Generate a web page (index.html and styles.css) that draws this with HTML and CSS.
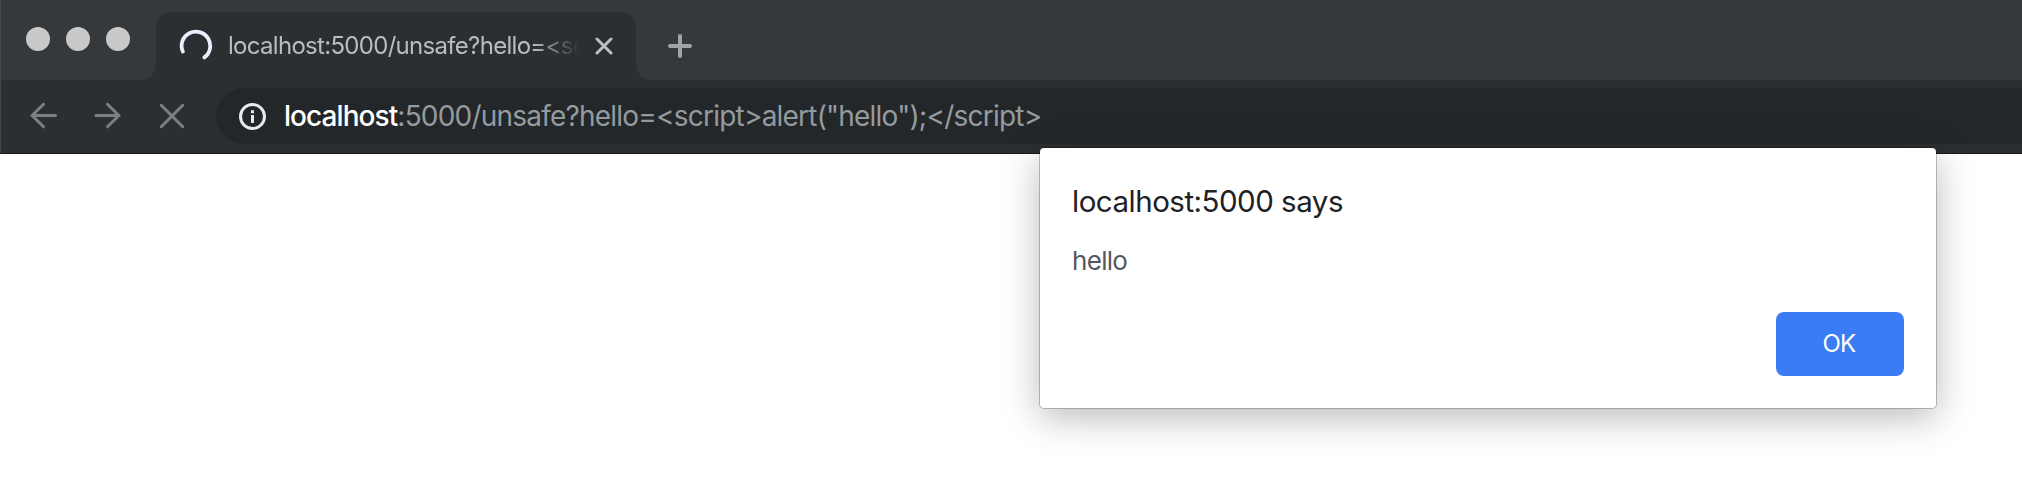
FILE: index.html
```html
<!DOCTYPE html>
<html lang="en">
<head>
<meta charset="utf-8">
<title>localhost:5000</title>
<link rel="stylesheet" href="styles.css">
</head>
<body>
<header class="browser">
  <div class="tabstrip">
    <div class="lights"><i class="light"></i><i class="light"></i><i class="light"></i></div>
    <div class="tab">
      <svg class="spinner" width="34" height="34" viewBox="0 0 34 34"><path d="M3.8 22.6A14.3 14.3 0 1 1 25.4 28.4" /></svg>
      <span class="tab-title">localhost:5000/unsafe?hello=&lt;sc</span>
      <svg class="tab-close" width="18" height="18" viewBox="0 0 18 18"><path d="M2 2L16 16M16 2L2 16"/></svg>
    </div>
    <svg class="new-tab" width="24" height="24" viewBox="0 0 24 24"><path d="M12 2V22M2 12H22"/></svg>
  </div>
  <div class="toolbar">
    <nav class="nav">
      <svg width="28" height="28" viewBox="0 0 28 28"><path d="M25.5 13.5H2.5M13.5 2.2L2.2 13.5L13.5 24.8"/></svg>
      <svg width="28" height="28" viewBox="0 0 28 28"><path d="M2 13.5H25M13.5 2.2L24.8 13.5L13.5 24.8"/></svg>
      <svg width="28" height="28" viewBox="0 0 28 28"><path d="M3.3 3.3L24.7 24.7M24.7 3.3L3.3 24.7"/></svg>
    </nav>
    <div class="omnibox">
      <svg class="info" width="28" height="28" viewBox="0 0 28 28"><circle cx="14.5" cy="14.5" r="12"/><path d="M14.5 13V21M14.5 8.2V11.2"/></svg>
      <span class="url"><b>localhost</b>:5000/unsafe?hello=&lt;script&gt;alert("hello");&lt;/script&gt;</span>
    </div>
  </div>
</header>
<section class="dialog">
  <h1 class="dialog-title">localhost:5000 says</h1>
  <p class="dialog-text">hello</p>
  <button class="ok">OK</button>
</section>
</body>
</html>
```
FILE: styles.css
```css
* { box-sizing: border-box; }
body {
  margin: 0;
  height: 494px;
  overflow: hidden;
  background: #fff;
  font-family: Inter, "Liberation Sans", sans-serif;
}
svg { display: block; flex: none; fill: none; stroke-linecap: round; }
.browser {
  height: 154px;
  background: #2b2f32;
  border-bottom: 1px solid #17191b;
  box-shadow: inset 1px 0 #45494b;
}
.tabstrip {
  display: flex;
  height: 80px;
  padding-left: 26px;
  background: #35393c;
  box-shadow: inset 1px 0 #45494b;
}
.lights { display: flex; gap: 16px; width: 130px; padding-top: 27px; }
.light { width: 24px; height: 24px; border-radius: 50%; background: #c9c9c9; }
.tab {
  position: relative;
  display: flex;
  align-items: center;
  width: 480px;
  height: 68px;
  margin-top: 12px;
  padding: 0 24px 0 23px;
  border-radius: 16px 16px 0 0;
  background: #2b2f32;
}
.tab::before, .tab::after {
  content: "";
  position: absolute;
  bottom: 0;
  width: 16px;
  height: 16px;
}
.tab::before { left: -16px; background: radial-gradient(circle at 0 0, transparent 15.5px, #2b2f32 16.5px); }
.tab::after { right: -16px; background: radial-gradient(circle at 100% 0, transparent 15.5px, #2b2f32 16.5px); }
.spinner { stroke: #e8f0fe; stroke-width: 3.8; }
.tab-title {
  width: 352px;
  margin-left: 15px;
  white-space: nowrap;
  color: #babdbf;
  font-size: 24px;
  line-height: 36px;
  letter-spacing: -0.7px;
  mask-image: linear-gradient(90deg, #000 305px, transparent 351px);
  -webkit-mask-image: linear-gradient(90deg, #000 305px, transparent 351px);
}
.tab-close { margin-left: 15px; stroke: #bcc0c2; stroke-width: 3; }
.new-tab { margin: 34px 0 0 32px; stroke: #a0a4a7; stroke-width: 4; }
.toolbar { display: flex; height: 73px; padding: 8px 0 9px 30px; }
.nav { display: flex; gap: 36px; width: 186px; padding-top: 14px; }
.nav svg { stroke: #7b8083; stroke-width: 3; }
.omnibox {
  display: flex;
  align-items: center;
  flex: 1;
  height: 56px;
  padding-left: 22px;
  border-radius: 28px 0 0 28px;
  background: #23272a;
}
.info { stroke: #e8eaed; stroke-width: 3; }
.info path { stroke-linecap: butt; }
.url {
  margin: 0 0 0 18px;
  white-space: nowrap;
  color: #949b9f;
  font-size: 28px;
  line-height: 40px;
  letter-spacing: -0.79px;
}
.url b { color: #fff; font-weight: 500; letter-spacing: -0.93px; }
.dialog {
  position: absolute;
  top: 148px;
  left: 1040px;
  display: flex;
  flex-direction: column;
  width: 896px;
  height: 260px;
  padding: 32px;
  border-radius: 4px;
  background: #fff;
  box-shadow: 0 0 0 1px rgba(0, 0, 0, .22), 0 9px 38px rgba(0, 0, 0, .28);
}
.dialog-title {
  margin: -1px 0 0;
  color: #202124;
  font-size: 29.5px;
  font-weight: 400;
  line-height: 44px;
  letter-spacing: -0.5px;
}
.dialog-text {
  margin: 20px 0 0;
  color: #55595e;
  font-size: 26px;
  line-height: 36px;
  letter-spacing: -0.7px;
}
.ok {
  width: 128px;
  height: 64px;
  margin: auto 0 0 auto;
  padding: 0 2px 0 0;
  border: 0;
  border-radius: 8px;
  background: #3b7bf3;
  color: #fff;
  font: 400 24px/64px Inter, "Liberation Sans", sans-serif;
  letter-spacing: -0.8px;
}
```
